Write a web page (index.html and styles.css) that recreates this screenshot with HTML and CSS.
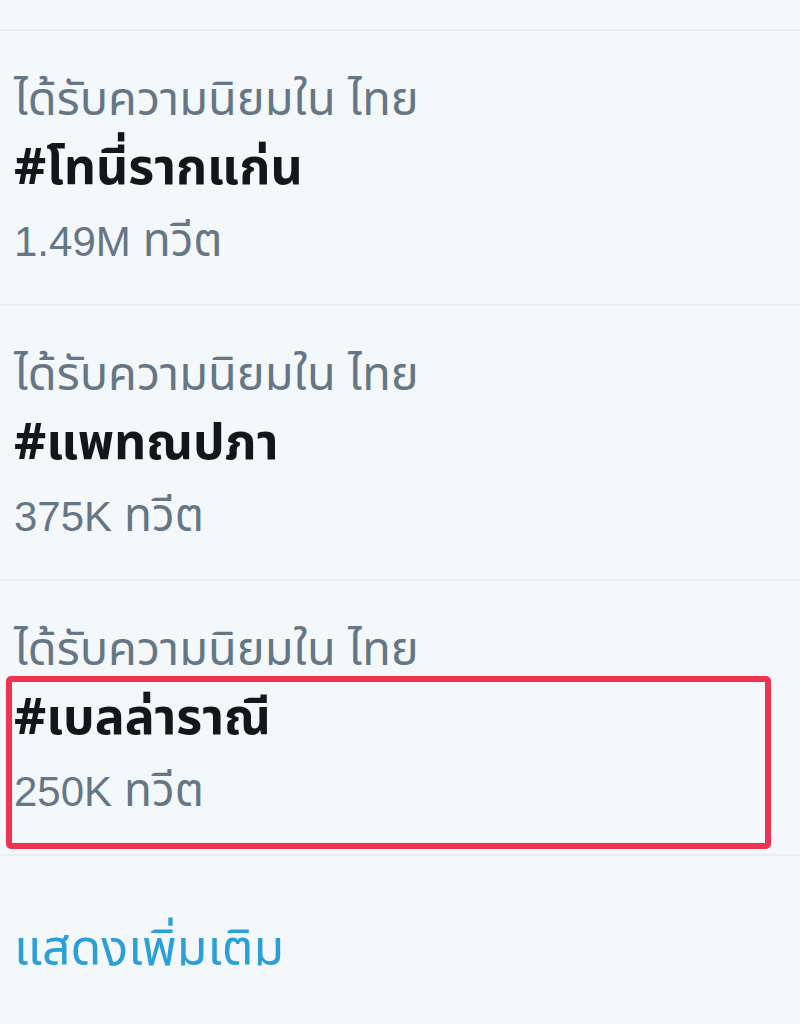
FILE: index.html
```html
<!DOCTYPE html>
<html lang="th">
<head>
    <meta charset="UTF-8">
    <meta name="viewport" content="width=device-width, initial-scale=1.0">
    <title>แนวโน้ม</title>
    <link rel="stylesheet" href="styles.css">
</head>
<body>
    <section class="trends">
        <div class="trend-top"></div>

        <div class="trend">
            <div class="trend-label">ได้รับความนิยมใน ไทย</div>
            <div class="trend-name">#โทนี่รากแก่น</div>
            <div class="trend-count"><span class="num">1.49M</span> ทวีต</div>
        </div>

        <div class="trend">
            <div class="trend-label">ได้รับความนิยมใน ไทย</div>
            <div class="trend-name">#แพทณปภา</div>
            <div class="trend-count"><span class="num">375K</span> ทวีต</div>
        </div>

        <div class="trend">
            <div class="trend-label">ได้รับความนิยมใน ไทย</div>
            <div class="trend-name">#เบลล่าราณี</div>
            <div class="trend-count"><span class="num">250K</span> ทวีต</div>
            <!-- red highlight drawn over the entry -->
            <div class="highlight"></div>
        </div>

        <a href="#" class="show-more">แสดงเพิ่มเติม</a>
    </section>
</body>
</html>
```

FILE: styles.css
```css
body {
    margin: 0;
    padding: 0;
    background: #f5f8fa;
    font-family: "Noto Sans Thai", "Liberation Sans", "Noto Sans", sans-serif;
}

.trends {
    width: 800px;
    min-height: 1024px;
    background: #f5f8fa;
}

.trend-top {
    height: 29px;
    border-bottom: 2px solid #eceff1;
}

.trend {
    position: relative;
    height: 275px;
    padding: 0 14px;
    box-sizing: border-box;
    border-bottom: 2px solid #eceff1;
    display: flex;
    flex-direction: column;
}

.trend-label,
.trend-name,
.trend-count {
    line-height: 70px;
    white-space: nowrap;
}

.trend-label {
    margin-top: 35px;
    font-size: 47px;
    color: #657786;
}

.trend-name {
    margin-top: -2px;
    color: #14171a;
    font-weight: bold;
    font-size: 50px;
}

.trend-count {
    margin-top: 3px;
    font-size: 46px;
    color: #657786;
}

.num {
    font-family: "Liberation Sans", Arial, sans-serif;
    font-size: 42px;
}

.highlight {
    position: absolute;
    left: 6px;
    right: 29px;
    top: 95px;
    bottom: 5px;
    border: 6px solid #ef3350;
    border-radius: 5px;
}

.show-more {
    display: block;
    padding: 56px 14px 0;
    font-size: 50px;
    color: #2a9fd8;
    text-decoration: none;
}
```
